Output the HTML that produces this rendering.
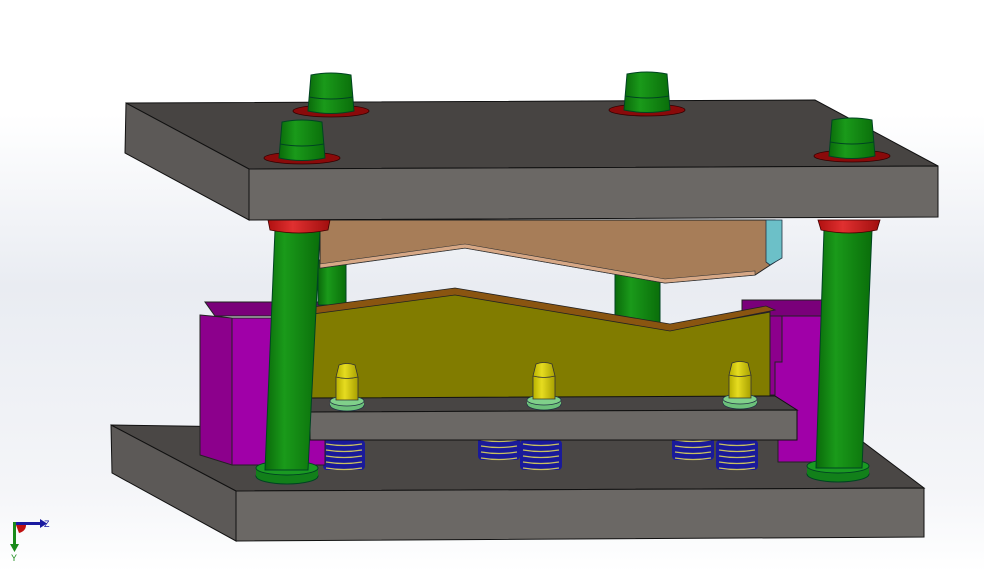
<!DOCTYPE html>
<html><head><style>
html,body{margin:0;padding:0;width:984px;height:572px;overflow:hidden;background:#fff}
svg{display:block}
text{font-family:"Liberation Sans",sans-serif}
</style></head><body>
<svg width="984" height="572" viewBox="0 0 984 572" xmlns="http://www.w3.org/2000/svg">
<defs>
<linearGradient id="bg" x1="0" y1="0" x2="0" y2="1">
<stop offset="0" stop-color="#ffffff"/><stop offset="0.2" stop-color="#ffffff"/><stop offset="0.5" stop-color="#e9ecf2"/><stop offset="0.85" stop-color="#f4f5f8"/><stop offset="1" stop-color="#ffffff"/>
</linearGradient>
<linearGradient id="gp" x1="0" y1="0" x2="1" y2="0">
<stop offset="0" stop-color="#0a6a0a"/><stop offset="0.35" stop-color="#1a9a1a"/><stop offset="1" stop-color="#0a6e0a"/>
</linearGradient>
<linearGradient id="yp" x1="0" y1="0" x2="1" y2="0">
<stop offset="0" stop-color="#b8b000"/><stop offset="0.4" stop-color="#e6dc20"/><stop offset="1" stop-color="#a8a000"/>
</linearGradient>
<linearGradient id="rc" x1="0" y1="0" x2="1" y2="0">
<stop offset="0" stop-color="#b01010"/><stop offset="0.4" stop-color="#e03030"/><stop offset="1" stop-color="#a00e0e"/>
</linearGradient>
<g id="bolt">
<ellipse cx="0" cy="0" rx="38" ry="6" fill="#8a0a0a" stroke="#300" stroke-width="0.8"/>
<path d="M-20,-36 Q0,-40 20,-36 L23,0 Q0,5 -23,0 Z" fill="url(#gp)" stroke="#042" stroke-width="1"/>
<path d="M-22,-14 Q0,-10 22,-14" fill="none" stroke="#042" stroke-width="1"/>
</g>
<g id="pin">
<ellipse cx="0" cy="0" rx="17" ry="6" fill="#6cc07a" stroke="#234" stroke-width="0.8"/>
<rect x="-17" y="-4" width="34" height="4" fill="#6cc07a"/>
<ellipse cx="0" cy="-4" rx="17" ry="5" fill="#80d08a" stroke="#234" stroke-width="0.8"/>
<path d="M-11,-5 L-11,-28 L-8,-40 Q0,-43 8,-40 L11,-28 L11,-5 Z" fill="url(#yp)" stroke="#333" stroke-width="0.8"/>
<path d="M-11,-28 Q0,-25 11,-28" fill="none" stroke="#333" stroke-width="0.8"/>
</g>
<g id="spring">
<rect x="0" y="0" width="42" height="30" rx="4" fill="#1a1a9a"/>
<path d="M3,4 Q21,7 39,4 M3,10 Q21,13 39,10 M3,16 Q21,19 39,16 M3,22 Q21,25 39,22 M3,28 Q21,31 39,28" stroke="#c8c060" stroke-width="1.2" fill="none"/>
</g>
</defs>
<rect width="984" height="572" fill="url(#bg)"/>

<!-- bottom plate -->
<polygon points="111,425 855,436 924,488 236,491" fill="#4a4745" stroke="#111" stroke-width="1"/>
<polygon points="236,491 924,488 924,537 236,541" fill="#6b6865" stroke="#111" stroke-width="1"/>
<polygon points="111,425 236,491 236,541 112,473" fill="#5c5957" stroke="#111" stroke-width="1"/>

<!-- springs -->
<use href="#spring" x="478" y="430"/>
<use href="#spring" x="672" y="430"/>
<use href="#spring" x="323" y="440"/>
<use href="#spring" x="520" y="440"/>
<use href="#spring" x="716" y="440"/>

<!-- magenta blocks -->
<polygon points="205,302 325,302 325,316 215,316" fill="#7a007a" stroke="#222" stroke-width="1"/>
<polygon points="200,315 232,318 232,465 200,455" fill="#8c008c" stroke="#222" stroke-width="1"/>
<polygon points="232,318 325,318 325,465 232,465" fill="#a000a8" stroke="#222" stroke-width="1"/>
<polygon points="742,300 822,300 822,316 742,316" fill="#7a007a" stroke="#222" stroke-width="1"/>
<polygon points="770,316 822,316 822,462 778,462 778,440 770,440" fill="#a000a8" stroke="#222" stroke-width="1"/>
<polygon points="766,316 782,316 782,362 775,362 775,395 766,395" fill="#8c008c" stroke="#222" stroke-width="1"/>

<!-- inner posts -->
<rect x="318" y="260" width="28" height="45" fill="url(#gp)" stroke="#042"/>
<rect x="615" y="272" width="45" height="52" fill="url(#gp)" stroke="#042"/>

<!-- die (olive) -->
<polygon points="305,312 455,293 670,330 770,312 770,398 305,398" fill="#817c00" stroke="#222" stroke-width="1"/>
<polygon points="305,308 455,288 670,324 766,306 775,310 670,331 455,295 305,315" fill="#8a5510" stroke="#222" stroke-width="0.8"/>

<!-- punch (tan) -->
<polygon points="320,220 775,220 775,262 755,275 665,283 465,248 320,268" fill="#a77d58" stroke="#222" stroke-width="1"/>
<polygon points="320,264 465,244 665,279 755,271 755,275 665,283 465,248 320,268" fill="#d7a886" stroke="#333" stroke-width="0.6"/>
<polygon points="766,220 782,220 782,258 770,265 766,262" fill="#6cc0c8" stroke="#234" stroke-width="0.8"/>

<!-- stripper plate -->
<polygon points="310,398 775,396 797,410 310,412" fill="#484544" stroke="#111" stroke-width="1"/>
<polygon points="310,412 797,410 797,440 310,440" fill="#6b6865" stroke="#111" stroke-width="1"/>

<!-- pins -->
<use href="#pin" x="347" y="405"/>
<use href="#pin" x="544" y="404"/>
<use href="#pin" x="740" y="403"/>

<!-- guide pillars -->
<ellipse cx="287" cy="476" rx="31" ry="8" fill="#12801a" stroke="#042"/>
<rect x="256" y="468" width="62" height="8" fill="#12801a"/>
<ellipse cx="287" cy="468" rx="31" ry="7" fill="#1a9a22" stroke="#042"/>
<polygon points="275,230 320,230 308,470 265,470" fill="url(#gp)" stroke="#042" stroke-width="1"/>
<path d="M268,220 L330,220 L328,230 Q299,236 270,230 Z" fill="url(#rc)" stroke="#400" stroke-width="0.8"/>

<ellipse cx="838" cy="474" rx="31" ry="8" fill="#12801a" stroke="#042"/>
<rect x="807" y="466" width="62" height="8" fill="#12801a"/>
<ellipse cx="838" cy="466" rx="31" ry="7" fill="#1a9a22" stroke="#042"/>
<polygon points="824,230 872,230 862,468 816,468" fill="url(#gp)" stroke="#042" stroke-width="1"/>
<path d="M818,220 L880,220 L877,230 Q849,236 821,230 Z" fill="url(#rc)" stroke="#400" stroke-width="0.8"/>

<!-- top plate -->
<polygon points="126,103 815,100 938,166 249,169" fill="#474442" stroke="#111" stroke-width="1"/>
<polygon points="249,169 938,166 938,217 249,220" fill="#6b6865" stroke="#111" stroke-width="1"/>
<polygon points="126,103 249,169 249,220 125,153" fill="#5c5957" stroke="#111" stroke-width="1"/>

<!-- bolts -->
<use href="#bolt" x="331" y="111"/>
<use href="#bolt" x="647" y="110"/>
<use href="#bolt" x="302" y="158"/>
<use href="#bolt" x="852" y="156"/>

<!-- triad -->
<rect x="13" y="522" width="28" height="3" fill="#1a1aa0"/>
<polygon points="40,519 47,523.5 40,528" fill="#1a1aa0"/>
<rect x="13" y="522" width="3" height="24" fill="#1a8a1a"/>
<polygon points="10,544 14.5,552 19,544" fill="#1a8a1a"/>
<path d="M16,525 L26,525 Q26,531 19,533 Z" fill="#c01010"/>
<text x="44" y="527" font-size="9" fill="#1a1aa0">Z</text>
<text x="11" y="561" font-size="9" fill="#1a8a1a">Y</text>
</svg>
</body></html>
